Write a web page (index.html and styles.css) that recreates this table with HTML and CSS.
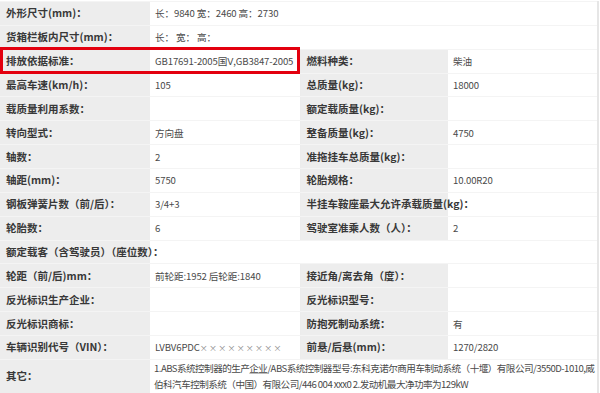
FILE: index.html
```html
<!DOCTYPE html>
<html lang="zh">
<head>
<meta charset="utf-8">
<link rel="stylesheet" href="styles.css">
</head>
<body>
<div class="wrap">
<table class="spec">
  <colgroup><col class="c1"><col class="c2"><col class="c3"><col class="c4"></colgroup>
  <tr><th>外形尺寸(mm)：</th><td colspan="3">长：9840 宽：2460 高：2730</td></tr>
  <tr><th>货箱栏板内尺寸(mm)：</th><td colspan="3">长： 宽： 高：</td></tr>
  <tr><th>排放依据标准：</th><td>GB17691-2005国<span class="rn">Ⅴ</span>,GB3847-2005</td><th>燃料种类：</th><td>柴油</td></tr>
  <tr><th>最高车速(km/h)：</th><td>105</td><th>总质量(kg)：</th><td>18000</td></tr>
  <tr><th>载质量利用系数：</th><td></td><th>额定载质量(kg)：</th><td></td></tr>
  <tr><th>转向型式：</th><td>方向盘</td><th>整备质量(kg)：</th><td>4750</td></tr>
  <tr><th>轴数：</th><td>2</td><th>准拖挂车总质量(kg)：</th><td></td></tr>
  <tr><th>轴距(mm)：</th><td>5750</td><th>轮胎规格：</th><td>10.00R20</td></tr>
  <tr><th>钢板弹簧片数（前/后）：</th><td>3/4+3</td><th>半挂车鞍座最大允许承载质量(kg)：</th><td></td></tr>
  <tr><th>轮胎数：</th><td>6</td><th>驾驶室准乘人数（人）：</th><td>2</td></tr>
  <tr><th>额定载客（含驾驶员）（座位数）：</th><td colspan="3"></td></tr>
  <tr><th>轮距（前/后)mm：</th><td>前轮距:1952 后轮距:1840</td><th>接近角/离去角（度）：</th><td></td></tr>
  <tr><th>反光标识生产企业：</th><td></td><th>反光标识型号：</th><td></td></tr>
  <tr><th>反光标识商标：</th><td></td><th>防抱死制动系统：</th><td>有</td></tr>
  <tr><th>车辆识别代号（VIN）：</th><td>LVBV6PDC<span class="x">×××××××××</span></td><th>前悬/后悬(mm)：</th><td>1270/2820</td></tr>
  <tr class="last"><th>其它：</th><td colspan="3" class="long">1.ABS系统控制器的生产<span class="u">企业</span>/ABS系统控制器型号:东科克诺尔商用车制动系统（十堰）有限公司/3550D-1010,威伯科汽车控制系统（中国）有限公司/446 004 xxx0 2.发动机最大净功率为129kW</td></tr>
</table>
<div class="mark"></div>
</div>
</body>
</html>
```

FILE: styles.css
```css
html, body {
  margin: 0;
  padding: 0;
  background: #ffffff;
}
.wrap {
  position: relative;
  width: 600px;
  height: 393px;
  overflow: hidden;
  padding-top: 1px;
  box-sizing: border-box;
}
.spec {
  border-collapse: collapse;
  table-layout: fixed;
  width: 598px;
  font-family: "Noto Sans CJK SC", "Microsoft YaHei", sans-serif;
  font-size: 10.5px;
  color: #444;
}
.c1 { width: 150px; }
.c2 { width: 150px; }
.c3 { width: 148px; }
.c4 { width: 150px; }
.spec th, .spec td {
  height: 23.86px;
  padding: 0 0 0 5px;
  box-sizing: border-box;
  text-align: left;
  vertical-align: middle;
  white-space: nowrap;
  overflow: visible;
  border-top: 1px solid #f4f4f4;
  border-bottom: 1px solid #f4f4f4;
  line-height: 14px;
}
.spec th {
  background: #ededed;
  font-weight: bold;
  color: #383838;
  padding-left: 6px;
}
.spec td {
  background: #fff;
  border-right: 1px solid #ececec;
  font-size: 9.6px;
  letter-spacing: -0.12px;
  color: #4a4a4a;
}
.spec td:last-child {
  border-right: 2px solid #e6e6e6;
}
.rn {
  font-family: "DejaVu Sans", sans-serif;
  font-size: 9px;
}
.x {
  color: #888;
  font-size: 8px;
  letter-spacing: 1.2px;
}
.spec .last th, .spec .last td {
  height: 34px;
}
.spec td.long {
  white-space: normal;
  line-height: 16px;
  padding-right: 0;
  padding-left: 4px;
  letter-spacing: -0.55px;
}
.u {
  text-decoration: underline;
  text-decoration-color: #bbb;
}
.mark {
  position: absolute;
  left: 0;
  top: 47px;
  width: 300px;
  height: 27px;
  border: 3px solid #e3000f;
  box-sizing: border-box;
}
```
